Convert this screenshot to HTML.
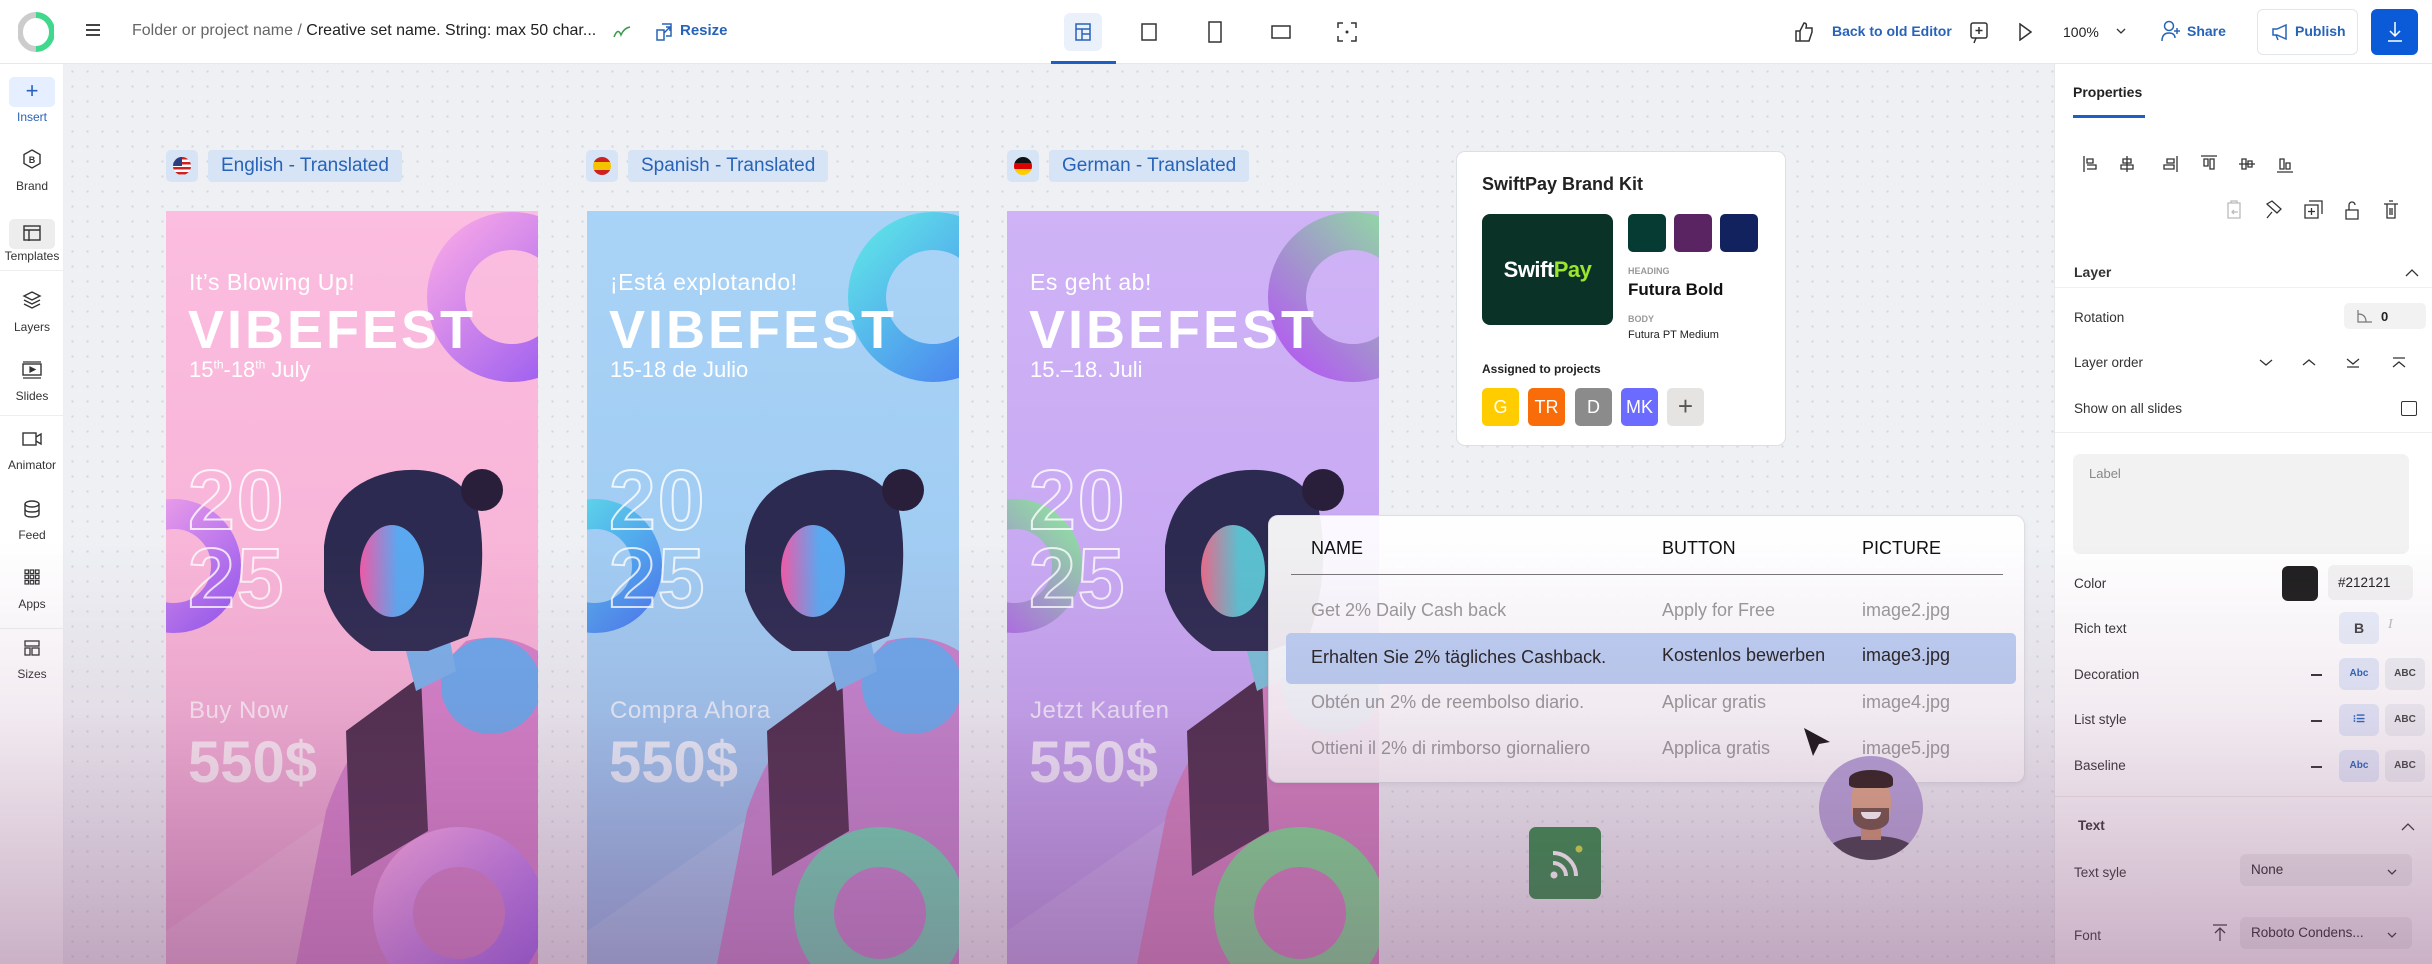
<!DOCTYPE html>
<html><head><meta charset="utf-8"><style>
*{box-sizing:border-box;margin:0;padding:0}
body{width:2432px;height:964px;overflow:hidden;position:relative;background:#eef0f4;font-family:"Liberation Sans",sans-serif;color:#222}
.a{position:absolute}
#top{left:0;top:0;width:2432px;height:64px;background:#fff;border-bottom:1px solid #e6e8ec}
#side{left:0;top:64px;width:64px;height:900px;background:#fff;border-right:1px solid #eceef2}
#canvas{left:65px;top:64px;width:1989px;height:900px;background-color:#eef0f4;background-image:radial-gradient(circle,#d3d6dc 1.1px,transparent 1.3px);background-size:15px 15px}
#panel{left:2054px;top:64px;width:378px;height:900px;background:#fff;border-left:1px solid #e6e8ec}
.si{position:absolute;left:0;width:64px;text-align:center;font-size:12px;color:#333}
.tag{height:32px;background:#d6e4f5;border-radius:4px;color:#2763b8;font-size:19px;line-height:32px;padding:0 13px}
.flag{width:32px;height:32px;border-radius:5px;background:#d6e4f5}
.flag i{position:absolute;left:7px;top:7px;width:18px;height:18px;border-radius:50%;overflow:hidden}
.poster{overflow:hidden;top:211px;width:372px;height:753px}
.poster .t1{position:absolute;left:23px;top:58px;color:#fff;font-size:23px;letter-spacing:.5px}
.poster .t2{position:absolute;left:22px;top:88px;color:#fff;font-size:54px;font-weight:bold;letter-spacing:3px}
.poster .t3{position:absolute;left:23px;top:146px;color:#fff;font-size:22px}
.poster .yr{position:absolute;left:22px;top:250px;color:transparent;-webkit-text-stroke:2px rgba(255,255,255,.8);font-size:84px;font-weight:bold;line-height:78px;letter-spacing:2px}
.poster .t4{position:absolute;left:23px;top:486px;color:rgba(255,255,255,.75);font-size:24px;letter-spacing:.5px}
.poster .t5{position:absolute;left:22px;top:518px;color:rgba(255,255,255,.75);font-size:58px;font-weight:bold}
.pl{position:absolute;left:19px;font-size:13.5px;color:#333}
.btn2{position:absolute;width:40px;height:32px;border-radius:6px;background:#eef0f4;font-size:10px;font-weight:bold;text-align:center;line-height:32px;color:#444}
</style></head><body>

<div id="top" class="a">
 <svg class="a" style="left:18px;top:12px" width="36" height="40" viewBox="0 0 36 40"><path d="M18 3 A16 17 0 1 0 18 37" fill="none" stroke="#ccc" stroke-width="6"/><path d="M18 3 A16 17 0 0 1 18 37" fill="none" stroke="#3fd88c" stroke-width="6"/></svg>
 <div class="a" style="left:86px;top:24px;width:14px;height:2px;background:#444;box-shadow:0 5px #444,0 10px #444"></div>
 <div class="a" style="left:132px;top:22px;font-size:16px;color:#666">Folder or project name / <span style="color:#222">Creative set name. String: max 50 char...</span></div>
 <svg class="a" style="left:612px;top:23px" width="20" height="18"><path d="M2 14 Q6 4 9 12 Q12 5 18 4" fill="none" stroke="#3a9a4a" stroke-width="1.5"/></svg>
 <svg class="a" style="left:656px;top:22px" width="16" height="20"><rect x="1" y="8" width="7" height="10" fill="none" stroke="#2763b8" stroke-width="1.5"/><path d="M6 2h9v12h-5M8 11l6-6M10 5h4v4" fill="none" stroke="#2763b8" stroke-width="1.5"/></svg>
 <div class="a" style="left:680px;top:22px;font-size:15px;font-weight:bold;color:#2763b8">Resize</div>
 <div class="a" style="left:1064px;top:13px;width:38px;height:38px;background:#eaf1fb;border-radius:6px"></div>
 <div class="a" style="left:1051px;top:61px;width:65px;height:3px;background:#1d5fc4"></div>
 <svg class="a" style="left:1075px;top:23px" width="16" height="18"><rect x="1" y="1" width="14" height="16" fill="none" stroke="#2763b8" stroke-width="1.5"/><path d="M1 6h14M7 6v11M7 11h8" stroke="#2763b8" stroke-width="1.5"/></svg>
 <svg class="a" style="left:1141px;top:23px" width="16" height="18"><rect x="1" y="1" width="14" height="16" fill="none" stroke="#333" stroke-width="1.5"/></svg>
 <svg class="a" style="left:1208px;top:21px" width="14" height="22"><rect x="1" y="1" width="12" height="20" fill="none" stroke="#333" stroke-width="1.5"/></svg>
 <svg class="a" style="left:1271px;top:25px" width="20" height="14"><rect x="1" y="1" width="18" height="12" fill="none" stroke="#333" stroke-width="1.5"/></svg>
 <svg class="a" style="left:1337px;top:22px" width="20" height="20"><path d="M1 6V1h5M14 1h5v5M19 14v5h-5M6 19H1v-5" fill="none" stroke="#333" stroke-width="1.5"/><circle cx="10" cy="10" r="1.5" fill="#333"/></svg>
 <svg class="a" style="left:1794px;top:21px" width="20" height="22"><path d="M2 10h4v10H2zM6 10l4-8c2 0 3 1 2 5h6v4l-3 9H6" fill="none" stroke="#333" stroke-width="1.5"/></svg>
 <div class="a" style="left:1832px;top:23px;font-size:14px;font-weight:bold;color:#2763b8">Back to old Editor</div>
 <svg class="a" style="left:1970px;top:22px" width="20" height="22"><rect x="1" y="1" width="16" height="15" rx="2" fill="none" stroke="#333" stroke-width="1.5"/><path d="M9 5v7M5.5 8.5h7M6 16l-2 5" stroke="#333" stroke-width="1.5"/></svg>
 <svg class="a" style="left:2018px;top:23px" width="14" height="18"><path d="M2 1l11 8-11 8z" fill="none" stroke="#333" stroke-width="1.5"/></svg>
 <div class="a" style="left:2063px;top:24px;font-size:14px;color:#222">100%</div>
 <svg class="a" style="left:2116px;top:28px" width="10" height="7"><path d="M1 1l4 4 4-4" fill="none" stroke="#333" stroke-width="1.3"/></svg>
 <svg class="a" style="left:2161px;top:20px" width="22" height="22"><circle cx="8" cy="6" r="4.5" fill="none" stroke="#2763b8" stroke-width="1.5"/><path d="M1 21c0-6 3-8 7-8s6 2 6 5M16 8v6M13 11h6" fill="none" stroke="#2763b8" stroke-width="1.5"/></svg>
 <div class="a" style="left:2187px;top:23px;font-size:14px;font-weight:bold;color:#2763b8">Share</div>
 <div class="a" style="left:2257px;top:9px;width:101px;height:46px;border:1px solid #e3e6ea;border-radius:6px;background:#fff"></div>
 <svg class="a" style="left:2271px;top:23px" width="18" height="18"><path d="M2 6h4l9-4v14l-9-4H2zM5 12l2 5" fill="none" stroke="#2763b8" stroke-width="1.5"/></svg>
 <div class="a" style="left:2295px;top:23px;font-size:14px;font-weight:bold;color:#2763b8">Publish</div>
 <div class="a" style="left:2371px;top:9px;width:47px;height:46px;border-radius:6px;background:#0b5bd8"></div>
 <svg class="a" style="left:2386px;top:21px" width="18" height="22"><path d="M9 1v14M4 10l5 5 5-5M2 20h14" fill="none" stroke="#fff" stroke-width="1.5"/></svg>
</div>

<div id="side" class="a">
 <div class="a" style="left:9px;top:13px;width:46px;height:30px;background:#e6efff;border-radius:5px;color:#2763b8;font-size:22px;text-align:center;line-height:28px">+</div>
 <div class="si" style="top:46px;color:#2763b8">Insert</div>
 <svg class="a" style="left:23px;top:85px" width="18" height="20"><path d="M9 1l8 4.5v9L9 19l-8-4.5v-9z" fill="none" stroke="#333" stroke-width="1.4"/><text x="9" y="14" font-size="9" text-anchor="middle" font-family="Liberation Sans" font-weight="bold" fill="#333">B</text></svg>
 <div class="si" style="top:115px">Brand</div>
 <div class="a" style="left:9px;top:155px;width:46px;height:30px;background:#ededed;border-radius:5px"></div>
 <svg class="a" style="left:23px;top:161px" width="18" height="16"><rect x="1" y="1" width="16" height="14" fill="none" stroke="#333" stroke-width="1.4"/><path d="M1 5h16M6 5v11" stroke="#333" stroke-width="1.4"/></svg>
 <div class="si" style="top:185px;left:-2px;width:68px">Templates</div>
 <div class="a" style="left:0;top:206px;width:64px;height:1px;background:#eee"></div>
 <svg class="a" style="left:22px;top:226px" width="20" height="20"><path d="M10 2l8 4-8 4-8-4zM2 10l8 4 8-4M2 14l8 4 8-4" fill="none" stroke="#333" stroke-width="1.4"/></svg>
 <div class="si" style="top:256px">Layers</div>
 <svg class="a" style="left:22px;top:297px" width="20" height="18"><rect x="1" y="3" width="18" height="11" fill="none" stroke="#333" stroke-width="1.4"/><path d="M1 1h18M1 17h18M8 6l5 2.5-5 2.5z" stroke="#333" stroke-width="1.2" fill="#333"/></svg>
 <div class="si" style="top:325px">Slides</div>
 <div class="a" style="left:0;top:351px;width:64px;height:1px;background:#eee"></div>
 <svg class="a" style="left:22px;top:367px" width="20" height="16"><rect x="1" y="2" width="13" height="12" fill="none" stroke="#333" stroke-width="1.4"/><path d="M14 6l5-3v10l-5-3" fill="none" stroke="#333" stroke-width="1.4"/></svg>
 <div class="si" style="top:394px">Animator</div>
 <svg class="a" style="left:24px;top:436px" width="16" height="18"><ellipse cx="8" cy="4" rx="7" ry="3" fill="none" stroke="#333" stroke-width="1.4"/><path d="M1 4v10c0 2 3 3 7 3s7-1 7-3V4M1 9c0 2 3 3 7 3s7-1 7-3" fill="none" stroke="#333" stroke-width="1.4"/></svg>
 <div class="si" style="top:464px">Feed</div>
 <svg class="a" style="left:24px;top:505px" width="16" height="16"><g fill="none" stroke="#333" stroke-width="1.2"><rect x="1" y="1" width="3.5" height="3.5"/><rect x="6.2" y="1" width="3.5" height="3.5"/><rect x="11.5" y="1" width="3.5" height="3.5"/><rect x="1" y="6.2" width="3.5" height="3.5"/><rect x="6.2" y="6.2" width="3.5" height="3.5"/><rect x="11.5" y="6.2" width="3.5" height="3.5"/><rect x="1" y="11.5" width="3.5" height="3.5"/><rect x="6.2" y="11.5" width="3.5" height="3.5"/><rect x="11.5" y="11.5" width="3.5" height="3.5"/></g></svg>
 <div class="si" style="top:533px">Apps</div>
 <div class="a" style="left:0;top:564px;width:64px;height:1px;background:#eee"></div>
 <svg class="a" style="left:24px;top:576px" width="16" height="16"><rect x="1" y="1" width="14" height="5" fill="none" stroke="#333" stroke-width="1.3"/><rect x="1" y="8" width="5" height="7" fill="none" stroke="#333" stroke-width="1.3"/><rect x="8" y="8" width="7" height="7" fill="none" stroke="#333" stroke-width="1.3"/></svg>
 <div class="si" style="top:603px">Sizes</div>
</div>

<div id="canvas" class="a"></div>

<div class="a flag" style="left:166px;top:150px"><i style="background:repeating-linear-gradient(#c22 0 2.5px,#fff 2.5px 5px)"><b style="position:absolute;left:0;top:0;width:9px;height:9px;background:#2c3e80"></b></i></div>
<div class="a tag" style="left:208px;top:150px">English - Translated</div>
<div class="a flag" style="left:586px;top:150px"><i style="background:linear-gradient(#c22 0 28%,#f3c300 28% 72%,#c22 72%)"></i></div>
<div class="a tag" style="left:628px;top:150px">Spanish - Translated</div>
<div class="a flag" style="left:1007px;top:150px"><i style="background:linear-gradient(#111 0 33%,#d00 33% 66%,#fc0 66%)"></i></div>
<div class="a tag" style="left:1049px;top:150px">German - Translated</div>

<!-- posters -->
<div class="a poster" style="left:166px;background:linear-gradient(#fbbde0,#f7b3d6 60%,#e39ccc)">
 <svg class="a" style="left:0;top:0" width="372" height="753">
  <defs><linearGradient id="r1" x1="0" y1="0" x2="1" y2="1"><stop offset="0" stop-color="#f4a4e8"/><stop offset="1" stop-color="#9a5cf0"/></linearGradient>
  <linearGradient id="f1" x1="0" y1="0" x2="1" y2="0"><stop offset="0" stop-color="#f05aa8"/><stop offset=".6" stop-color="#5aa8f0"/></linearGradient></defs>
  <circle cx="346" cy="86" r="66" fill="none" stroke="url(#r1)" stroke-width="38"/>
  <circle cx="8" cy="355" r="52" fill="none" stroke="url(#r1)" stroke-width="30"/>
  <path d="M0 753 L0 720 L230 560 L260 753 Z" fill="#fff" opacity=".12"/>
  <path d="M130 753 L160 600 Q190 510 260 470 L300 430 Q340 420 372 440 L372 753 Z" fill="#d27ac8" opacity=".9"/>
  <ellipse cx="325" cy="475" rx="50" ry="48" fill="#6aa8ec"/>
  <path d="M180 520 L255 465 L262 620 L185 665 Z" fill="#4a2a4a"/>
  <path d="M230 400 L280 410 L290 460 L250 480 Z" fill="#7ab0ea"/>
  <path d="M158 335 Q165 272 230 260 Q292 252 312 300 Q324 360 302 425 L262 440 L205 440 Q170 420 158 380 Z" fill="#2c2a50"/>
  <ellipse cx="226" cy="360" rx="32" ry="46" fill="url(#f1)"/>
  <circle cx="316" cy="279" r="21" fill="#2a1f3a"/>
  <circle cx="293" cy="702" r="66" fill="none" stroke="url(#r1)" stroke-width="40"/>
 </svg>
 <div class="t1">It’s Blowing Up!</div><div class="t2">VIBEFEST</div><div class="t3">15<sup style="font-size:12px">th</sup>-18<sup style="font-size:12px">th</sup> July</div>
 <div class="yr">20<br>25</div><div class="t4">Buy Now</div><div class="t5">550$</div>
</div>

<div class="a poster" style="left:587px;background:linear-gradient(#a9d3f6,#9fcaf2 60%,#8fb6e6)">
 <svg class="a" style="left:0;top:0" width="372" height="753">
  <defs><linearGradient id="r2" x1="0" y1="0" x2="1" y2="1"><stop offset="0" stop-color="#5ee0e8"/><stop offset="1" stop-color="#4a7ff0"/></linearGradient></defs>
  <circle cx="346" cy="86" r="66" fill="none" stroke="url(#r2)" stroke-width="38"/>
  <circle cx="8" cy="355" r="52" fill="none" stroke="url(#r2)" stroke-width="30"/>
  <path d="M0 753 L0 720 L230 560 L260 753 Z" fill="#fff" opacity=".12"/>
  <path d="M130 753 L160 600 Q190 510 260 470 L300 430 Q340 420 372 440 L372 753 Z" fill="#c87ac8" opacity=".9"/>
  <ellipse cx="325" cy="475" rx="50" ry="48" fill="#6aa8ec"/>
  <path d="M180 520 L255 465 L262 620 L185 665 Z" fill="#4a2a4a"/>
  <path d="M230 400 L280 410 L290 460 L250 480 Z" fill="#7ab0ea"/>
  <path d="M158 335 Q165 272 230 260 Q292 252 312 300 Q324 360 302 425 L262 440 L205 440 Q170 420 158 380 Z" fill="#2c2a50"/>
  <ellipse cx="226" cy="360" rx="32" ry="46" fill="url(#f1)"/>
  <circle cx="316" cy="279" r="21" fill="#2a1f3a"/>
  <circle cx="293" cy="702" r="66" fill="none" stroke="#6cd2b0" stroke-width="40"/>
 </svg>
 <div class="t1">¡Está explotando!</div><div class="t2">VIBEFEST</div><div class="t3">15-18 de Julio</div>
 <div class="yr">20<br>25</div><div class="t4">Compra Ahora</div><div class="t5">550$</div>
</div>

<div class="a poster" style="left:1007px;background:linear-gradient(#cfb3f6,#c6a6f2 60%,#b594e4)">
 <svg class="a" style="left:0;top:0" width="372" height="753">
  <defs><linearGradient id="r3" x1="1" y1="0" x2="0" y2="1"><stop offset="0" stop-color="#8ee0a0"/><stop offset="1" stop-color="#b35cf0"/></linearGradient>
  <linearGradient id="f3" x1="0" y1="0" x2="1" y2="0"><stop offset="0" stop-color="#e86a8a"/><stop offset=".6" stop-color="#5ac0d0"/></linearGradient></defs>
  <circle cx="346" cy="86" r="66" fill="none" stroke="url(#r3)" stroke-width="38"/>
  <circle cx="8" cy="355" r="52" fill="none" stroke="url(#r3)" stroke-width="30"/>
  <path d="M0 753 L0 720 L230 560 L260 753 Z" fill="#fff" opacity=".12"/>
  <path d="M130 753 L160 600 Q190 510 260 470 L300 430 Q340 420 372 440 L372 753 Z" fill="#d27ab8" opacity=".9"/>
  <ellipse cx="325" cy="475" rx="50" ry="48" fill="#6ab8d8"/>
  <path d="M180 520 L255 465 L262 620 L185 665 Z" fill="#4a2a4a"/>
  <path d="M230 400 L280 410 L290 460 L250 480 Z" fill="#7ac0d8"/>
  <path d="M158 335 Q165 272 230 260 Q292 252 312 300 Q324 360 302 425 L262 440 L205 440 Q170 420 158 380 Z" fill="#2c2a50"/>
  <ellipse cx="226" cy="360" rx="32" ry="46" fill="url(#f3)"/>
  <circle cx="316" cy="279" r="21" fill="#2a1f3a"/>
  <circle cx="293" cy="702" r="66" fill="none" stroke="#7ad78e" stroke-width="40"/>
 </svg>
 <div class="t1">Es geht ab!</div><div class="t2">VIBEFEST</div><div class="t3">15.–18. Juli</div>
 <div class="yr">20<br>25</div><div class="t4">Jetzt Kaufen</div><div class="t5">550$</div>
</div>

<!-- brand kit -->
<div class="a" style="left:1456px;top:151px;width:330px;height:295px;background:#fff;border:1px solid #dcdfe4;border-radius:9px">
 <div class="a" style="left:25px;top:22px;font-size:18px;font-weight:bold;color:#222">SwiftPay Brand Kit</div>
 <div class="a" style="left:25px;top:62px;width:131px;height:111px;border-radius:8px;background:#0a3226;color:#fff;font-size:22px;font-weight:bold;text-align:center;line-height:111px;letter-spacing:-.5px">Swift<span style="color:#9be52e">Pay</span></div>
 <div class="a" style="left:171px;top:62px;width:38px;height:38px;border-radius:5px;background:#053b33"></div>
 <div class="a" style="left:217px;top:62px;width:38px;height:38px;border-radius:5px;background:#5a2463"></div>
 <div class="a" style="left:263px;top:62px;width:38px;height:38px;border-radius:5px;background:#11225e"></div>
 <div class="a" style="left:171px;top:114px;font-size:9px;color:#999;font-weight:bold">HEADING</div>
 <div class="a" style="left:171px;top:128px;font-size:17px;font-weight:bold;color:#111">Futura Bold</div>
 <div class="a" style="left:171px;top:162px;font-size:9px;color:#999;font-weight:bold">BODY</div>
 <div class="a" style="left:171px;top:177px;font-size:11px;color:#222">Futura PT Medium</div>
 <div class="a" style="left:25px;top:210px;font-size:12px;font-weight:bold;color:#222">Assigned to projects</div>
 <div class="a" style="left:25px;top:236px;width:37px;height:38px;border-radius:5px;background:#fc0;color:#fff;font-size:18px;text-align:center;line-height:38px">G</div>
 <div class="a" style="left:71px;top:236px;width:37px;height:38px;border-radius:5px;background:#f86d0a;color:#fff;font-size:18px;text-align:center;line-height:38px">TR</div>
 <div class="a" style="left:118px;top:236px;width:37px;height:38px;border-radius:5px;background:#8b8b8b;color:#fff;font-size:18px;text-align:center;line-height:38px">D</div>
 <div class="a" style="left:164px;top:236px;width:37px;height:38px;border-radius:5px;background:#6b6bff;color:#fff;font-size:18px;text-align:center;line-height:38px">MK</div>
 <div class="a" style="left:210px;top:236px;width:37px;height:38px;border-radius:5px;background:#e6e4e2;color:#555;font-size:26px;text-align:center;line-height:36px">+</div>
</div>

<!-- table -->
<div class="a" style="left:1268px;top:515px;width:757px;height:268px;background:rgba(255,255,255,.93);border:1px solid #dcdfe4;border-radius:10px;box-shadow:0 2px 6px rgba(0,0,0,.06)">
 <div class="a" style="left:42px;top:22px;font-size:18px;color:#111">NAME</div>
 <div class="a" style="left:393px;top:22px;font-size:18px;color:#111">BUTTON</div>
 <div class="a" style="left:593px;top:22px;font-size:18px;color:#111">PICTURE</div>
 <div class="a" style="left:22px;top:58px;width:712px;height:1px;background:#777"></div>
 <div class="a" style="left:17px;top:117px;width:730px;height:51px;background:#bcd0f4;border-radius:5px"></div>
 <div class="a" style="left:42px;top:84px;font-size:18px;color:#999">Get 2% Daily Cash back</div>
 <div class="a" style="left:393px;top:84px;font-size:18px;color:#999">Apply for Free</div>
 <div class="a" style="left:593px;top:84px;font-size:18px;color:#999">image2.jpg</div>
 <div class="a" style="left:42px;top:131px;font-size:18px;color:#222">Erhalten Sie 2% tägliches Cashback.</div>
 <div class="a" style="left:393px;top:129px;font-size:18px;color:#222">Kostenlos bewerben</div>
 <div class="a" style="left:593px;top:129px;font-size:18px;color:#222">image3.jpg</div>
 <div class="a" style="left:42px;top:176px;font-size:18px;color:#999">Obtén un 2% de reembolso diario.</div>
 <div class="a" style="left:393px;top:176px;font-size:18px;color:#999">Aplicar gratis</div>
 <div class="a" style="left:593px;top:176px;font-size:18px;color:#999">image4.jpg</div>
 <div class="a" style="left:42px;top:222px;font-size:18px;color:#999">Ottieni il 2% di rimborso giornaliero</div>
 <div class="a" style="left:393px;top:222px;font-size:18px;color:#999">Applica gratis</div>
 <div class="a" style="left:593px;top:222px;font-size:18px;color:#999">image5.jpg</div>
</div>
<svg class="a" style="left:1802px;top:726px" width="30" height="32"><path d="M2 2l26 14-11 2-6 12z" fill="#111"/></svg>
<div class="a" style="left:1529px;top:827px;width:72px;height:72px;border-radius:7px;background:#2e8a45"></div>
<svg class="a" style="left:1549px;top:844px" width="36" height="38"><circle cx="5" cy="31" r="3.5" fill="#fff"/><path d="M4 19a13 13 0 0 1 13 13M4 9a23 23 0 0 1 23 23" fill="none" stroke="#fff" stroke-width="4"/><circle cx="30" cy="5" r="3.5" fill="#c8e03a"/></svg>
<div class="a" style="left:1819px;top:756px;width:104px;height:104px;border-radius:50%;background:#b4a3d8;overflow:hidden">
 <div class="a" style="left:6px;top:80px;width:92px;height:40px;border-radius:45% 45% 0 0;background:#3e3a46"></div>
 <div class="a" style="left:42px;top:64px;width:20px;height:20px;background:#c9906e"></div>
 <div class="a" style="left:32px;top:20px;width:40px;height:54px;border-radius:45%;background:#dca684"></div>
 <div class="a" style="left:30px;top:14px;width:44px;height:18px;border-radius:50% 50% 20% 20%;background:#2a1d18"></div>
 <div class="a" style="left:34px;top:52px;width:36px;height:22px;border-radius:0 0 50% 50%;background:#4a3328;opacity:.75"></div>
 <div class="a" style="left:42px;top:56px;width:20px;height:7px;border-radius:0 0 8px 8px;background:#fff"></div>
</div>

<!-- right panel -->
<div id="panel" class="a">
 <div class="a" style="left:18px;top:20px;font-size:14px;font-weight:bold;color:#222">Properties</div>
 <div class="a" style="left:18px;top:51px;width:72px;height:3px;background:#1d5fc4"></div>
 <svg class="a" style="left:28px;top:91px" width="220" height="18" fill="none" stroke="#333" stroke-width="1.3">
  <path d="M1 1v16M4 4h6v4H4zM4 10h9v4H4"/>
  <path d="M44 1v16M40 4h8v4h-8zM38 10h12v4H38z"/>
  <path d="M94 1v16M84 4h7v4h-7zM81 10h10v4H81z"/>
  <path d="M118 1h16M121 4v7h4V4zM127 4v10h4V4z"/>
  <path d="M156 9h16M159 4v10h4V4zM165 6v6h4V6z"/>
  <path d="M194 17h16M197 4v10h4V4zM203 8v6h4V8z"/>
 </svg>
 <svg class="a" style="left:170px;top:136px" width="200" height="20" fill="none" stroke-width="1.3">
  <path d="M9 3h-6v15h12V3h-6M6 3V1h6v2M7 12h6M9 10l-2 2 2 2" stroke="#bbb"/>
  <path d="M42 4l5-3 9 8-4 4-9-8zM47 12l-5 6" stroke="#333"/>
  <path d="M80 5h13v13H80zM84 1h13v13M86.5 8v7M83 11.5h7" stroke="#333"/>
  <path d="M121 10h12v9h-12zM124 10V5a3 3 0 0 1 6 0" stroke="#333"/>
  <path d="M159 4h14M162 4v14h8V4M164 1h4M165 8v7M167 8v7" stroke="#333"/>
 </svg>
 <div class="a" style="left:0;top:223px;width:378px;height:1px;background:#f0f0f0"></div>
 <div class="pl" style="top:200px;font-weight:bold;font-size:14px">Layer</div>
 <svg class="a" style="left:350px;top:205px" width="14" height="8"><path d="M1 7l6-6 6 6" fill="none" stroke="#333" stroke-width="1.3"/></svg>
 <div class="pl" style="top:246px">Rotation</div>
 <div class="a" style="left:289px;top:239px;width:82px;height:26px;background:#f2f2f2;border-radius:5px"></div>
 <svg class="a" style="left:302px;top:245px" width="16" height="14"><path d="M1 1v12h14M1 5q8 0 8 8" fill="none" stroke="#777" stroke-width="1.2"/></svg>
 <div class="a" style="left:326px;top:245px;font-size:13px;font-weight:bold">0</div>
 <div class="pl" style="top:291px">Layer order</div>
 <svg class="a" style="left:2px;top:292px" width="370" height="14" fill="none" stroke="#333" stroke-width="1.3"><path d="M203 4l6 5 6-5M246 9l6-5 6 5M290 3l6 5 6-5M290 11h12M336 2h12M336 11l6-5 6 5"/></svg>
 <div class="pl" style="top:337px">Show on all slides</div>
 <div class="a" style="left:346px;top:337px;width:16px;height:15px;border:1.4px solid #333;border-radius:2px"></div>
 <div class="a" style="left:0;top:368px;width:378px;height:1px;background:#eee"></div>
 <div class="a" style="left:18px;top:390px;width:336px;height:100px;background:#f2f2f2;border-radius:7px"></div>
 <div class="a" style="left:34px;top:402px;font-size:13px;color:#888">Label</div>
 <div class="pl" style="top:512px">Color</div>
 <div class="a" style="left:227px;top:502px;width:36px;height:35px;background:#1f1f1f;border-radius:6px"></div>
 <div class="a" style="left:273px;top:501px;width:85px;height:35px;background:#f2f2f2;border-radius:6px;font-size:13.5px;line-height:35px;padding-left:10px">#212121</div>
 <div class="pl" style="top:557px">Rich text</div>
 <div class="btn2" style="left:284px;top:548px;background:#e8eefa;font-size:14px">B</div>
 <div class="a" style="left:333px;top:553px;font-size:14px;color:#bbb;font-style:italic;font-family:'Liberation Serif',serif">I</div>
 <div class="pl" style="top:603px">Decoration</div>
 <div class="pl" style="top:648px">List style</div>
 <div class="pl" style="top:694px">Baseline</div>
 <div class="a" style="left:256px;top:610px;width:11px;height:1.5px;background:#333"></div>
 <div class="a" style="left:256px;top:656px;width:11px;height:1.5px;background:#333"></div>
 <div class="a" style="left:256px;top:702px;width:11px;height:1.5px;background:#333"></div>
 <div class="btn2" style="left:284px;top:594px;background:#e3eafa;color:#2763b8">Abc</div>
 <div class="btn2" style="left:330px;top:594px">ABC</div>
 <div class="btn2" style="left:284px;top:640px;background:#e3eafa;color:#2763b8">⁝☰</div>
 <div class="btn2" style="left:330px;top:640px">ABC</div>
 <div class="btn2" style="left:284px;top:686px;background:#e3eafa;color:#2763b8">Abc</div>
 <div class="btn2" style="left:330px;top:686px">ABC</div>
 <div class="a" style="left:0;top:732px;width:378px;height:1px;background:#eee"></div>
 <div class="pl" style="top:754px;left:23px;font-weight:bold">Text</div>
 <svg class="a" style="left:346px;top:759px" width="14" height="8"><path d="M1 7l6-6 6 6" fill="none" stroke="#333" stroke-width="1.3"/></svg>
 <div class="pl" style="top:801px">Text syle</div>
 <div class="a" style="left:185px;top:790px;width:172px;height:32px;background:#efefef;border-radius:6px;font-size:13.5px;line-height:32px;padding-left:11px">None</div>
 <svg class="a" style="left:332px;top:805px" width="10" height="6"><path d="M1 1l4 4 4-4" fill="none" stroke="#333" stroke-width="1.3"/></svg>
 <div class="pl" style="top:864px">Font</div>
 <svg class="a" style="left:157px;top:860px" width="16" height="18"><path d="M1 1h14M8 17V4M3 9l5-5 5 5" fill="none" stroke="#333" stroke-width="1.3"/></svg>
 <div class="a" style="left:185px;top:853px;width:172px;height:32px;background:#efefef;border-radius:6px;font-size:13.5px;line-height:32px;padding-left:11px">Roboto Condens...</div>
 <svg class="a" style="left:332px;top:868px" width="10" height="6"><path d="M1 1l4 4 4-4" fill="none" stroke="#333" stroke-width="1.3"/></svg>
</div>

<div class="a" style="left:0;top:540px;width:2432px;height:424px;pointer-events:none;background:linear-gradient(rgba(150,90,140,0),rgba(150,95,140,.12) 40%,rgba(130,70,120,.42))"></div>
</body></html>
